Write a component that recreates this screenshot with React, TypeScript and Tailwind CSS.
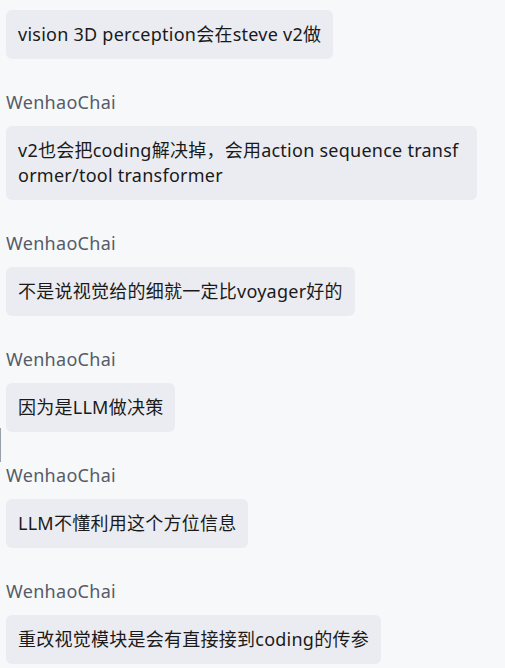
const messages = [
  'v2也会把coding解决掉，会用action sequence transformer/tool transformer',
  '不是说视觉给的细就一定比voyager好的',
  '因为是LLM做决策',
  'LLM不懂利用这个方位信息',
  '重改视觉模块是会有直接接到coding的传参',
]

function Bubble({ text }: { text: string }) {
  return (
    <div className="self-start max-w-[471px] rounded-[6px] bg-[#ebecf1] px-3 py-3 text-[18px] leading-[25px] tracking-[0.25px] text-[#1a1a1a] break-all">
      {text}
    </div>
  )
}

export default function App() {
  return (
    <div
      className="relative min-h-[668px] w-[505px] bg-[#f7f8fa] px-[6px] pt-[10px]"
      style={{ fontFamily: '"Noto Sans", "Noto Sans CJK SC", sans-serif' }}
    >
      {/* scroll marker on the left edge */}
      <div className="absolute left-0 top-[428px] h-[34px] w-px bg-[#9aa0a8]" />

      <div className="flex flex-col">
        <Bubble text="vision 3D perception会在steve v2做" />
      </div>

      {messages.map((m, i) => (
        <div key={i} className="mt-[31px] flex flex-col">
          <div className="mb-3 text-[18px] leading-6 tracking-[0.3px] text-[#545c69]">WenhaoChai</div>
          <Bubble text={m} />
        </div>
      ))}
    </div>
  )
}
